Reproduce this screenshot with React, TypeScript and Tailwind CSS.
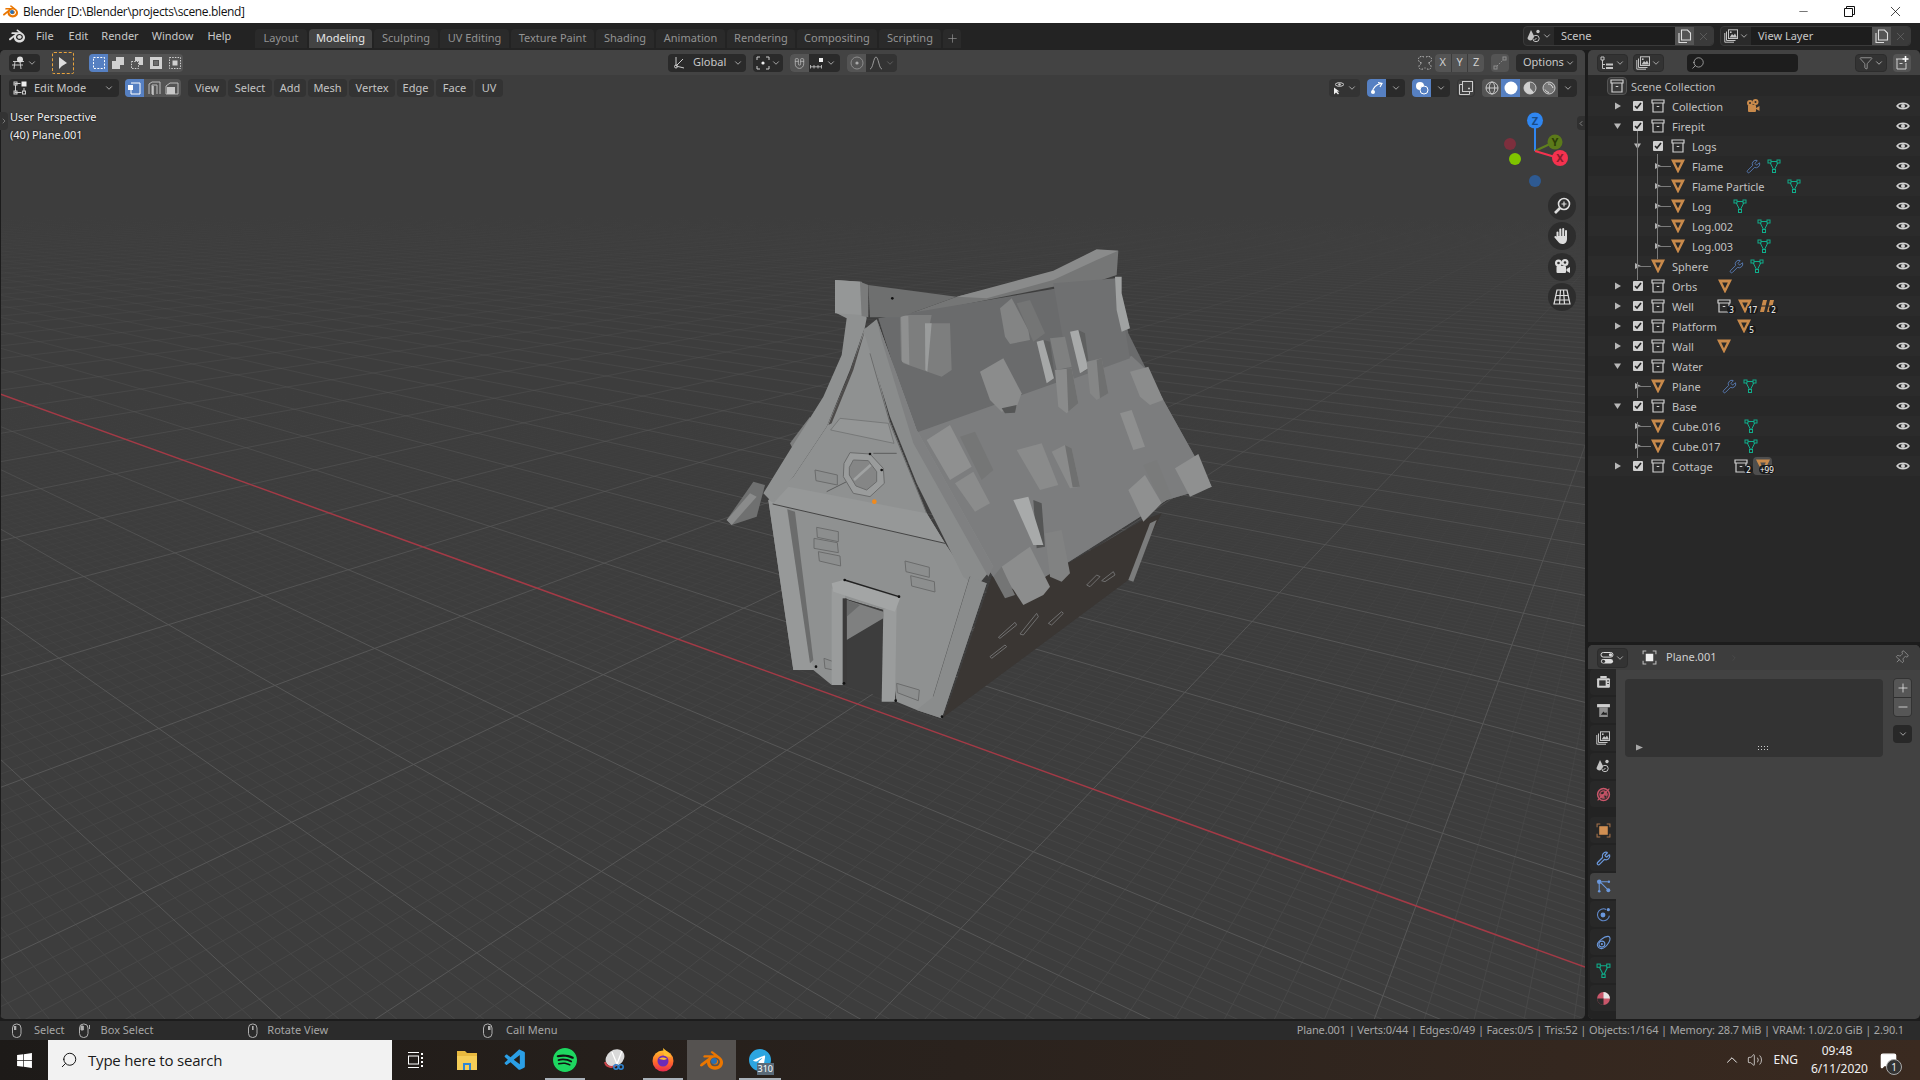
import React from "react";
import { Wrench, Search, Funnel, Pin, Minus, X, Plus, ChevronDown, ChevronUp, ChevronLeft, ChevronRight, Magnet, MessageSquare, Volume2 } from "lucide-react";
import { SiBlender, SiSpotify, SiTelegram } from "react-icons/si";
import { FaWindows } from "react-icons/fa";
import { VscVscode } from "react-icons/vsc";

const G = "#c4c4c4";

const Ic = ({ s = 14, children, className = "" }: { s?: number; children: React.ReactNode; className?: string }) => (
  <svg width={s} height={s} viewBox="0 0 14 14" fill="none" className={className}>
    {children}
  </svg>
);

const Chev = ({ className = "text-[#bdbdbd]" }: { className?: string }) => <ChevronDown size={10} strokeWidth={2} className={className} />;

const CollectionIcon = ({ c = "#cfcfcf" }: { c?: string }) => (
  <Ic>
    <path d="M1 1h12v3H1zM2 4v9h10V4M5.7 7.5h2.6" stroke={c} strokeWidth="1.2" />
  </Ic>
);
const ObjectIcon = () => (
  <Ic>
    <path fillRule="evenodd" fill="#c98a4b" d="M0 .5h14L7 14.5zM4.2 3.4 7 9.2l2.8-5.8z" />
  </Ic>
);
const MeshIcon = ({ s = 14 }: { s?: number }) => (
  <Ic s={s}>
    <path d="M2.5 2.5h9L7 11.5z" stroke="#10ad8b" strokeWidth="1" />
    <rect x="1" y="1" width="3" height="3" fill="#282828" stroke="#10ad8b" />
    <rect x="10" y="1" width="3" height="3" fill="#282828" stroke="#10ad8b" />
    <rect x="5.5" y="10.5" width="3" height="3" fill="#282828" stroke="#10ad8b" />
  </Ic>
);
const WrenchIcon = () => <Wrench size={15} strokeWidth={1.3} color="#5f88c9" />;
const EyeIcon = () => (
  <Ic>
    <path d="M1 7C3.4 3.4 10.6 3.4 13 7 10.6 10.6 3.4 10.6 1 7Z" stroke="#d0d0d0" strokeWidth="1.4" />
    <circle cx="7" cy="7" r="2" fill="#d0d0d0" />
  </Ic>
);
const LayerIcon = () => (
  <Ic>
    <path d="M.8 4v9.2H10M2.5 2.5v9h9" stroke={G} strokeWidth="1" />
    <rect x="4.5" y=".8" width="9" height="8.7" stroke={G} strokeWidth="1" />
    <path d="M5.5 8.5 8 5l1.5 1.5L11 4.5l2 4z" fill={G} />
    <circle cx="6.8" cy="3.2" r=".9" fill={G} />
  </Ic>
);
const SceneIcon = () => (
  <Ic>
    <path d="M4 1 .5 9c0 2 3 3 4.5 2L7 7z" fill={G} />
    <circle cx="9" cy="9.5" r="3.2" stroke={G} />
    <circle cx="11" cy="2.5" r="1.7" fill={G} />
    <path d="M7.5 11 9.5 9" stroke={G} />
  </Ic>
);
const DashSquare = () => (
  <Ic>
    <rect x="1.5" y="1.5" width="11" height="11" stroke="#fff" strokeDasharray="2 1.4" />
  </Ic>
);

const Check = () => (
  <span className="w-[10px] h-[10px] bg-[#cfcfcf] rounded-[1px] flex items-center justify-center shrink-0">
    <svg width="8" height="8" viewBox="0 0 8 8" fill="none">
      <path d="M1 4l2 2 4-5" stroke="#222" strokeWidth="1.6" />
    </svg>
  </span>
);

const Badge = ({ t, className }: { t: string; className: string }) => (
  <span className={`absolute top-[6px] h-[9px] min-w-[9px] px-[1px] rounded-full bg-[#1a1a1a] text-white text-[8px] leading-[9px] text-center ${className}`}>{t}</span>
);

type Item = React.ReactNode;
type RowT = { label: string; lvl: 0 | 1 | 2; kind: "coll" | "obj"; exp: "r" | "d" | "s"; w: string; items?: Item[]; horiz?: boolean };

const M = <MeshIcon key="m" />;
const W = <WrenchIcon key="w" />;
const Sp = (k: string, c: string) => <span key={k} className={c} />;

const rows: RowT[] = [
  { label: "Collection", lvl: 0, kind: "coll", exp: "r", w: "w-[72px]", items: [
    <svg key="c" width="16" height="16" viewBox="0 0 16 16"><circle cx="6" cy="5" r="3" fill="#c98a4b" /><circle cx="11.5" cy="4" r="3" fill="#c98a4b" /><rect x="4" y="7" width="8" height="7" rx="1" fill="#c98a4b" /><path d="M12 10l3.5-2v5L12 11z" fill="#c98a4b" /><circle cx="6" cy="5" r="1" fill="#2b2b2b" /><circle cx="11.5" cy="4" r="1" fill="#2b2b2b" /></svg>,
  ] },
  { label: "Firepit", lvl: 0, kind: "coll", exp: "d", w: "w-[60px]" },
  { label: "Logs", lvl: 1, kind: "coll", exp: "d", w: "w-[40px]" },
  { label: "Flame", lvl: 2, kind: "obj", exp: "s", w: "w-[54px]", items: [W, Sp("a", "w-[4px]"), M], horiz: true },
  { label: "Flame Particle", lvl: 2, kind: "obj", exp: "s", w: "w-[95px]", items: [M], horiz: true },
  { label: "Log", lvl: 2, kind: "obj", exp: "s", w: "w-[41px]", items: [M], horiz: true },
  { label: "Log.002", lvl: 2, kind: "obj", exp: "s", w: "w-[65px]", items: [M], horiz: true },
  { label: "Log.003", lvl: 2, kind: "obj", exp: "s", w: "w-[65px]", items: [M], horiz: true },
  { label: "Sphere", lvl: 1, kind: "obj", exp: "s", w: "w-[57px]", items: [W, Sp("a", "w-[4px]"), M], horiz: true },
  { label: "Orbs", lvl: 0, kind: "coll", exp: "r", w: "w-[46px]", items: [<ObjectIcon key="o" />] },
  { label: "Well", lvl: 0, kind: "coll", exp: "r", w: "w-[45px]", items: [
    <span key="a" className="relative flex w-[20px]"><CollectionIcon /><Badge t="3" className="left-[10px]" /></span>,
    <span key="b" className="relative flex w-[21px]"><ObjectIcon /><Badge t="17" className="left-[9px]" /></span>,
    <span key="c" className="relative flex w-[14px]">
      <svg width="14" height="14" viewBox="0 0 14 14"><path d="M3 1h4L4 13H0zM10 1h4l-3 12H7z" fill="#c98a4b" /><path d="M0 7h14" stroke="#282828" /></svg>
      <Badge t="2" className="left-[9px]" />
    </span>,
  ] },
  { label: "Platform", lvl: 0, kind: "coll", exp: "r", w: "w-[65px]", items: [
    <span key="b" className="relative flex w-[21px]"><ObjectIcon /><Badge t="5" className="left-[10px]" /></span>,
  ] },
  { label: "Wall", lvl: 0, kind: "coll", exp: "r", w: "w-[45px]", items: [<ObjectIcon key="o" />] },
  { label: "Water", lvl: 0, kind: "coll", exp: "d", w: "w-[60px]" },
  { label: "Plane", lvl: 1, kind: "obj", exp: "s", w: "w-[50px]", items: [W, Sp("a", "w-[4px]"), M], horiz: true },
  { label: "Base", lvl: 0, kind: "coll", exp: "d", w: "w-[60px]" },
  { label: "Cube.016", lvl: 1, kind: "obj", exp: "s", w: "w-[72px]", items: [M], horiz: true },
  { label: "Cube.017", lvl: 1, kind: "obj", exp: "s", w: "w-[72px]", items: [M], horiz: true },
  { label: "Cottage", lvl: 0, kind: "coll", exp: "r", w: "w-[62px]", items: [
    <span key="a" className="relative flex w-[18px]"><CollectionIcon /><Badge t="2" className="left-[10px]" /></span>,
    <span key="b" className="relative flex items-center justify-center w-[19px] h-[18px] bg-[#4e4e4e] rounded-[4px]"><ObjectIcon /><Badge t="+99" className="left-[6px] top-[8px]" /></span>,
  ] },
];

const indent = ["pl-[26px]", "pl-[46px]", "pl-[66px]"];

function Expand({ t }: { t: RowT["exp"] }) {
  return (
    <span className="w-[8px] h-[8px] flex items-center justify-center shrink-0">
      <svg width="8" height="8" viewBox="0 0 8 8">
        {t === "d" ? <path d="M0 1.5h7L3.5 7z" fill="#b8b8b8" /> : t === "r" ? <path d="M1 .5 7 4 1 7.5z" fill="#b8b8b8" /> : <path d="M1 1 7 4 1 7z" fill="#b0b0b0" />}
      </svg>
    </span>
  );
}

function Row({ r, i }: { r: RowT; i: number }) {
  return (
    <div className={`relative h-[20px] flex items-center pr-[10px] ${indent[r.lvl]} ${i % 2 === 0 ? "bg-[#2b2b2b]" : "bg-[#282828]"}`}>
      {r.horiz && <span className="absolute h-px w-[13px] bg-[#7a7a7a] top-[10px] ml-[4px]" />}
      <Expand t={r.exp} />
      {r.kind === "coll" ? (
        <>
          <span className="ml-[11px]"><Check /></span>
          <span className="ml-[8px] flex"><CollectionIcon /></span>
          <span className="ml-[7px]" />
        </>
      ) : (
        <>
          <span className="ml-[9px] flex"><ObjectIcon /></span>
          <span className="ml-[7px]" />
        </>
      )}
      <span className={`${r.w} shrink-0 text-[#c2c2c2] whitespace-nowrap pt-[2px]`}>{r.label}</span>
      <span className="flex items-center gap-[1px]">{r.items}</span>
      <span className="ml-auto flex"><EyeIcon /></span>
    </div>
  );
}

function TreeLine({ c }: { c: string }) {
  return <span className={`absolute w-px bg-[#7a7a7a] ${c}`} />;
}

function Outliner() {
  return (
    <div className="h-[592px] bg-[#282828] rounded-t-[5px] flex flex-col overflow-hidden text-[11px]">
      <div className="h-[25px] bg-[#424242] flex items-center shrink-0 pl-[9px]">
        <span className="w-[31px] h-[18px] rounded-[4px] bg-[#333] border border-[#2c2c2c] flex items-center justify-center gap-[1px]">
          <Ic><path d="M1 1h3v3H1zM2.500 4v8.500H5M2.500 8.500H5" stroke={G} /><path d="M6 7.500h7v2H6zM6 11h7v2H6z" fill={G} /></Ic>
          <Chev />
        </span>
        <span className="ml-[5px] w-[31px] h-[18px] rounded-[4px] bg-[#333] border border-[#2c2c2c] flex items-center justify-center gap-[1px]"><LayerIcon /><Chev /></span>
        <span className="ml-[23px] w-[111px] h-[18px] rounded-[4px] bg-[#1d1d1d] flex items-center pl-[4px]">
          <Search size={14} strokeWidth={1.2} color={G} className="-scale-x-100" />
        </span>
        <span className="ml-[57px] w-[32px] h-[18px] rounded-[4px] bg-[#333] border border-[#2c2c2c] flex items-center justify-center gap-[1px]">
          <Funnel size={14} strokeWidth={1.1} color={G} />
          <Chev />
        </span>
        <span className="ml-[6px] w-[18px] h-[18px] rounded-[4px] bg-[#545454] flex items-center justify-center">
          <Ic><path d="M1 3h8M2 3v10h9V7M4.5 7.5h3" stroke="#d0d0d0" /><path d="M10.5 0v6M7.5 3h6" stroke="#fff" strokeWidth="1.6" /></Ic>
        </span>
      </div>
      <div className="relative">
        <div className="h-[21px] flex items-center pl-[19px] bg-[#282828]">
          <span className="w-[20px] h-[18px] rounded-[4px] bg-[#383838] border border-[#555] flex items-center justify-center"><CollectionIcon /></span>
          <span className="ml-[4px] pt-[4px] text-[#bcbcbc]">Scene Collection</span>
        </div>
        {rows.map((r, i) => (
          <Row key={r.label} r={r} i={i} />
        ))}
        <TreeLine c="left-[49px] top-[56px] h-[149px]" />
        <TreeLine c="left-[69px] top-[79px] h-[105px]" />
        <TreeLine c="left-[49px] top-[307px] h-[16px]" />
        <TreeLine c="left-[49px] top-[347px] h-[36px]" />
      </div>
    </div>
  );
}

const TabI = ({ active, children, mt = "" }: { active?: boolean; children: React.ReactNode; mt?: string }) => (
  <div className={`h-[26px] w-[26px] flex items-center justify-center rounded-l-[4px] ${active ? "bg-[#424242]" : "bg-[#282828]"} ${mt}`}>{children}</div>
);

function Properties() {
  return (
    <div className="h-[374px] rounded-[5px] overflow-hidden flex flex-col text-[11px] bg-[#424242]">
      <div className="h-[25px] bg-[#3d3d3d] flex items-center pl-[9px] shrink-0">
        <span className="w-[31px] h-[20px] rounded-[4px] bg-[#333] border border-[#2c2c2c] flex items-center justify-center gap-[1px]">
          <Ic><rect x="1" y="1.5" width="12" height="4.6" rx="2.3" stroke="#ddd" /><rect x="1" y="8" width="12" height="4.6" rx="2.3" fill="#ddd" /><circle cx="10.5" cy="3.8" r="1.6" fill="#ddd" /><circle cx="3.5" cy="10.3" r="1.6" fill="#333" /></Ic>
          <Chev />
        </span>
        <span className="ml-[14px] flex">
          <Ic s={15}><path d="M1 4V1h3M10 1h3v3M13 10v3h-3M4 13H1v-3" stroke="#bbb" /><rect x="3.5" y="3.5" width="7" height="7" fill="#eee" /></Ic>
        </span>
        <span className="ml-[9px] text-[#d0d0d0]">Plane.001</span>
        <ChevronRight size={10} className="ml-[12px] text-[#4c4c4c]" />
        <Pin size={15} strokeWidth={1.2} color="#9a9a9a" className="ml-auto mr-[11px] rotate-45" />
      </div>
      <div className="flex flex-1 min-h-0">
        <div className="w-[28px] bg-[#232323] pl-[2px] -mt-[1px] flex flex-col gap-[2px] shrink-0">
          <TabI><Ic s={15}><rect x="1" y="3" width="12" height="9" rx="1" fill="#cfcfcf" /><rect x="3" y="5" width="6" height="5" fill="#333" /><path d="M4 1h6v2H4z" fill="#cfcfcf" /><path d="M10.5 5.5h1.5M10.5 8h1.5" stroke="#333" /></Ic></TabI>
          <TabI><Ic s={15}><rect x="1" y="1" width="12" height="3" fill="#cfcfcf" /><path d="M3 4h8v9H3z" fill="#8f8f8f" /><path d="M4.5 11 7 8l1.5 1.5 1-1 1 2.5z" fill="#222" /></Ic></TabI>
          <TabI><LayerIcon /></TabI>
          <TabI><SceneIcon /></TabI>
          <TabI><Ic s={15}><circle cx="7" cy="7" r="5.5" stroke="#c9566a" strokeWidth="1.4" /><circle cx="7" cy="7" r="4" fill="#b94f60" /><path d="M4 5.5l3-1.5.5 2-2 .8zM7.5 8l2.5.5-1.5 2.5z" fill="#2a2a2a" /><path d="M1.5 12.5 12.5 1.5" stroke="#c9566a" /></Ic></TabI>
          <TabI mt="mt-[8px]"><Ic s={15}><path d="M1 4V1h3M10 1h3v3M13 10v3h-3M4 13H1v-3" stroke="#a5724a" /><rect x="3" y="3" width="8" height="8" fill="#d18f52" /></Ic></TabI>
          <TabI><Wrench size={15} strokeWidth={2} color="#6b98dc" /></TabI>
          <TabI active><Ic s={15}><circle cx="3" cy="2.6" r="2.1" fill="#6b98dc" /><path d="M3 3v8M4 3l7 7M5 2.5h6" stroke="#6b98dc" /><circle cx="3" cy="11.5" r="1.2" fill="#6b98dc" /><circle cx="11.5" cy="10.5" r="1.8" fill="#6b98dc" /><circle cx="12" cy="2.5" r="1.2" fill="#6b98dc" /></Ic></TabI>
          <TabI><Ic s={15}><path d="M9.5 2.3A5.6 5.6 0 1 0 12.5 8" stroke="#5f88c9" strokeWidth="1" /><circle cx="6.5" cy="7.5" r="2.3" fill="#6b98dc" /><circle cx="11.5" cy="2.5" r="1.5" fill="#6b98dc" /></Ic></TabI>
          <TabI><Ic s={15}><path d="M1.3 9.5C.6 7 7.5 1 11.5 1.3c2 .2 2 3 .7 5.2-2 3.500-4 6-7 6.200-2 .1-3.300-1-3.900-3.200z" stroke="#6b98dc" /><circle cx="5.500" cy="8.500" r="2.800" stroke="#6b98dc" /><circle cx="5.500" cy="8.500" r="1" fill="#6b98dc" /></Ic></TabI>
          <TabI><MeshIcon s={15} /></TabI>
          <TabI><Ic s={15}><circle cx="7" cy="7" r="6" fill="#c9566a" /><path d="M7 7V1a6 6 0 0 1 6 6z" fill="#e6e6e6" /><path d="M7 7H1a6 6 0 0 0 6 6z" fill="#2b2b2b" /></Ic></TabI>
        </div>
        <div className="flex-1 pt-[9px] pl-[9px] flex items-start">
          <div className="relative w-[258px] h-[78px] bg-[#333333] rounded-[4px]">
            <span className="absolute left-[11px] bottom-[6px] text-[0px]"><svg width="7" height="7" viewBox="0 0 7 7"><path d="M0 .5 7 3.500 0 6.500z" fill="#a8a8a8" /></svg></span>
            <span className="absolute left-[133px] bottom-[6px] text-[0px]"><svg width="11" height="5" viewBox="0 0 11 5"><path d="M0 .5h1M3 .5h1M6 .5h1M9 .5h1M0 3.500h1M3 3.500h1M6 3.500h1M9 3.500h1" stroke="#cfcfcf" /></svg></span>
          </div>
          <div className="ml-[10px] -mt-[1px] w-[19px] flex flex-col">
            <div className="rounded-[4px] overflow-hidden flex flex-col gap-px bg-[#2f2f2f] border border-[#333] w-[19px]">
              <span className="h-[18px] bg-[#565656] flex items-center justify-center"><Plus size={14} strokeWidth={1.3} color="#eee" /></span>
              <span className="h-[18px] bg-[#565656] flex items-center justify-center"><Minus size={14} strokeWidth={1.3} color="#eee" /></span>
            </div>
            <span className="mt-[8px] h-[18px] rounded-[4px] bg-[#282828] flex items-center justify-center"><Chev /></span>
          </div>
        </div>
      </div>
    </div>
  );
}

// ---------- viewport drawing ----------
const R = 1020;
function gridPaths() {
  const VA = [-647, 160];
  const VB = [1690, 160];
  let major = "";
  let minor = "";
  for (let n = -60; n <= 1000; n++) {
    const x = 1732 + (n * 290) / 10;
    const d = `M${VA[0]} ${VA[1]}L${x.toFixed(1)} ${R}`;
    if (n === 0) continue;
    if (n % 10 === 0) major += d;
    else minor += d;
  }
  for (let n = -600; n <= 60; n++) {
    const x = -1126 + (n * 500) / 10;
    const d = `M${VB[0]} ${VB[1]}L${x.toFixed(1)} ${R}`;
    if (n % 10 === 0) major += d;
    else minor += d;
  }
  return { major, minor };
}
const grid = gridPaths();

const L1 = "#8f9191";
const shingles: [string, string][] = [
  ["600,255 695,255 690,280 750,280 755,420 725,440 610,400 603,390", "#7d7e7e"],
  ["603,258 625,258 628,405 606,395", "#8f9090"],
  ["675,280 695,280 682,425 676,420", "#9a9c9c"],
  ["900,235 935,205 985,300 990,330 930,342 915,320", "#838484"],
  ["950,220 990,210 1035,310 1000,335", "#747575"],
  ["840,425 910,385 965,490 950,530 905,545 870,510", "#8b8c8c"],
  ["905,535 950,525 945,548 915,550", "#555656"],
  ["1030,330 1050,335 1065,445 1042,455", "#5f6060"],
  ["1050,325 1095,320 1115,410 1070,420", "#7f8080"],
  ["1065,420 1115,415 1135,520 1100,550 1075,530", "#8a8b8b"],
  ["1100,415 1115,415 1135,520 1105,545", "#6f7070"],
  ["1010,335 1030,330 1062,445 1040,460", "#a6a8a8"],
  ["1135,300 1155,310 1168,415 1150,425", "#5f6060"],
  ["1110,305 1135,300 1165,415 1140,430", "#a8aaaa"],
  ["1160,395 1205,385 1225,490 1190,510 1170,490", "#858686"],
  ["1190,390 1205,385 1225,490 1200,505", "#6f7070"],
  ["1290,425 1345,410 1390,510 1350,525 1320,500", "#8b8c8c"],
  ["1245,140 1265,140 1265,190 1290,295 1265,305 1250,240", "#a0a2a2"],
  ["1260,550 1295,540 1335,650 1300,660", "#8e8f8f"],
  ["780,620 825,605 880,720 845,750", "#757676"],
  ["680,630 750,585 815,710 750,750", "#8f9090"],
  ["765,760 820,725 870,820 825,845", "#8b8c8c"],
  ["950,660 1025,640 1075,765 1020,780", "#8a8b8b"],
  ["1055,665 1095,645 1115,655 1140,770 1110,775", "#8a8b8b"],
  ["1095,645 1115,655 1140,770 1118,772", "#6f7070"],
  ["1000,810 1025,820 1035,950 1010,955", "#555656"],
  ["940,810 985,800 1030,945 1000,945", "#a8aaaa"],
  ["1035,910 1085,900 1110,1030 1085,1055 1050,1040", "#818282"],
  ["905,1010 990,950 1050,1070 1030,1095 970,1125 915,1040", "#8c8d8d"],
  ["880,1040 905,1010 945,1095 915,1105", "#747575"],
  ["1330,705 1370,690 1415,800 1385,820", "#7a7b7b"],
  ["1285,780 1335,735 1385,820 1330,875", "#8f9090"],
  ["1425,715 1495,672 1535,770 1470,800", "#8f9090"],
];

function House() {
  return (
    <g transform="translate(700,230) scale(0.33333)">
      {/* back pieces */}
      <polygon points="270,640 330,560 340,585 280,660" fill="#7d7e7e" />
      <polygon points="80,870 160,755 195,765 170,860 95,885" fill="#6f7070" />
      <polygon points="80,870 150,790 170,800 95,885" fill="#8a8b8b" />
      {/* dark side wall */}
      <polygon points="875,1040 1000,1060 1330,870 1385,850 1285,1050 730,1462 760,1380" fill="#3a3633" />
      <polygon points="1285,1050 1350,880 1370,870 1300,1055" fill="#7b7c7c" />
      {[
        "1160,1065 1190,1035 1200,1040 1170,1070",
        "1205,1052 1240,1025 1245,1035 1215,1055",
        "1045,1180 1085,1145 1090,1150 1055,1185",
        "960,1212 1010,1150 1015,1160 970,1215",
        "895,1222 945,1177 950,1185 900,1225",
        "870,1280 915,1245 920,1250 875,1285",
      ].map((p) => (
        <polygon key={p} points={p} fill="none" stroke="#6f6f6f" strokeWidth="3" />
      ))}
      {/* ridge */}
      <polygon points="770,200 1060,130 1190,60 1255,62 1250,135 1190,155 1060,170 600,262" fill="#757676" />
      <polygon points="770,200 1060,122 1190,58 1255,62 1190,90 1060,150 860,205" fill="#8a8b8b" />
      {/* roof */}
      <polygon points="535,265 1250,145 1285,310 1340,420 1535,770 1400,810 1000,1063 960,1090 880,1040 860,1010 640,600" fill="#6a6b6c" />
      <polygon points="648,608 1295,378 1340,420 1535,770 1400,810 1000,1063 960,1090 880,1040 860,1010" fill="#7c7d7e" />
      <polygon points="1060,160 1250,145 1290,385 1110,450" fill="#6f7071" />
      {shingles.map(([p, f]) => (
        <polygon key={p} points={p} fill={f} />
      ))}
      {/* gable + wall */}
      <polygon points="495,290 570,575 680,850 735,940 810,1050 860,1060 725,1465 650,1440 590,1415 550,1140 430,1105 395,1365 340,1320 280,1320 205,810 280,740 380,590 450,430" fill={L1} />
      <polygon points="205,810 260,835 335,1300 345,1320 280,1320" fill="#979999" />
      <polygon points="262,838 285,845 340,1290 330,1300" fill="#6b6c6c" />
      {/* left beam */}
      <polygon points="405,150 485,155 500,265 495,290 450,420 380,590 280,740 215,815 190,790 270,660 370,500 425,375 440,265 410,250" fill={L1} />
      <polygon points="497,295 460,420 395,580 385,585 450,425" fill="#4d4b4a" />
      <polygon points="405,150 480,155 485,255 405,250" fill="#959797" />
      <polygon points="480,155 505,165 505,262 485,258" fill="#7a7b7b" />
      <polygon points="505,165 770,200 600,262 510,262" fill="#6e6f6f" />
      {/* right beam */}
      <polygon points="490,300 530,268 650,600 880,1010 830,1070 790,1040 650,760 570,560" fill="#8a8c8c" />
      <polygon points="530,268 650,600 880,1010 865,1040 640,640 545,330" fill="#7f8081" />
      <path d="M510 370 570 580 680 850" stroke="#6a6b6b" strokeWidth="3" fill="none" />
      {/* cross beams */}
      <polygon points="392,600 420,565 565,580 582,640" fill="#949696" stroke="#6a6b6b" strokeWidth="2" />
      <polygon points="218,822 265,770 680,850 735,940" fill="#969898" />
      <path d="M218 822 735 940" stroke="#444" strokeWidth="3" fill="none" />
      <path d="M810 1040 700 1400M380 785 440 755M520 670 590 670" stroke="#5c5d5d" strokeWidth="3" fill="none" />
      {/* bricks */}
      {[
        "350,892 415,905 415,935 352,922",
        "342,925 412,938 415,968 342,955",
        "355,965 420,978 422,1008 358,993",
        "345,720 412,735 412,765 348,752",
        "615,993 688,1012 688,1042 618,1025",
        "632,1037 703,1055 705,1086 635,1068",
        "590,1360 658,1380 655,1412 592,1388",
        "372,1285 400,1295 400,1320 375,1315",
      ].map((p) => (
        <polygon key={p} points={p} fill="#8c8e8e" stroke="#6a6b6b" strokeWidth="3" />
      ))}
      {/* round window */}
      <polygon points="450,668 510,672 550,715 553,760 510,800 460,790 430,740 432,700" fill="#9a9c9c" stroke="#6a6b6b" strokeWidth="3" />
      <polygon points="460,690 505,692 530,725 530,755 500,780 468,768 448,735 448,712" fill="#858686" stroke="#6a6b6b" strokeWidth="3" />
      <path d="M462 750 512 705" stroke="#a0a2a2" strokeWidth="8" />
      {/* door */}
      <polygon points="430,1105 550,1140 550,1415 590,1415 430,1365" fill="#3d3d3d" />
      <polygon points="440,1110 550,1145 550,1165 440,1230" fill="#7f8080" />
      <polygon points="440,1110 480,1125 440,1160" fill="#6a6b6b" />
      <polygon points="395,1075 435,1095 435,1365 395,1365" fill="#9a9c9c" />
      <polygon points="428,1105 440,1105 440,1365 428,1365" fill="#3b3a3a" />
      <polygon points="550,1140 590,1120 585,1415 545,1415" fill="#9a9c9c" />
      <polygon points="395,1060 430,1050 600,1105 585,1145 400,1085" fill="#a3a5a5" />
      <path d="M434 1050 597 1100" stroke="#222" strokeWidth="4" />
      {/* lower wall corner */}
      <polygon points="700,1400 810,1040 860,1060 725,1465 650,1440" fill="#8a8c8c" />
      {/* verts */}
      {[[434, 1050], [597, 1100], [348, 1310], [432, 1360], [587, 1412], [726, 1460], [545, 720], [510, 672], [577, 205]].map(([x, y]) => (
        <circle key={`${x}${y}`} cx={x} cy={y} r="4" fill="#111" />
      ))}
      <circle cx="523" cy="815" r="7" fill="#f08a1d" />
    </g>
  );
}

function Gizmo() {
  return (
    <g fontFamily="Noto Sans, sans-serif" fontSize="11" fontWeight="700" textAnchor="middle">
      <circle cx="1510" cy="144" r="6" fill="#7d2f3d" />
      <circle cx="1535" cy="181" r="6" fill="#2e5a92" />
      <circle cx="1515" cy="159" r="6" fill="#7fc400" />
      <path d="M1535 151V124" stroke="#2f86f0" strokeWidth="2" />
      <path d="M1535 151 1552 143" stroke="#5f7f1f" strokeWidth="2" />
      <path d="M1535 151 1555 157" stroke="#f5324f" strokeWidth="2" />
      <circle cx="1535" cy="120.500" r="8" fill="#2f86f0" />
      <text x="1535" y="124.500" fill="#184a85">Z</text>
      <circle cx="1555" cy="142" r="7.500" fill="#5b7a1a" />
      <text x="1555" y="146" fill="#2c3d08">Y</text>
      <circle cx="1560" cy="158" r="8" fill="#f5324f" />
      <text x="1560" y="162" fill="#8a1c2c">X</text>
    </g>
  );
}

const NavBtn = ({ c, children }: { c: string; children: React.ReactNode }) => (
  <div className={`absolute left-[1548px] w-[28px] h-[28px] rounded-full bg-[#2d2d2d] flex items-center justify-center ${c}`}>{children}</div>
);

const Grp = ({ w, children, className = "" }: { w: string; children: React.ReactNode; className?: string }) => (
  <div className={`${w} h-[18px] rounded-[4px] bg-[#2a2a2a] flex items-center overflow-hidden shrink-0 ${className}`}>{children}</div>
);

const Seg = ({ blue, grey, w = "w-[19px]", children }: { blue?: boolean; grey?: boolean; w?: string; children: React.ReactNode }) => (
  <span className={`${w} h-full flex items-center justify-center shrink-0 ${blue ? "bg-[#5680c2]" : grey ? "bg-[#545454]" : ""}`}>{children}</span>
);

const menus: [string, string][] = [
  ["View", "w-[38px]"],
  ["Select", "w-[44px]"],
  ["Add", "w-[32px]"],
  ["Mesh", "w-[39px]"],
  ["Vertex", "w-[46px]"],
  ["Edge", "w-[37px]"],
  ["Face", "w-[37px]"],
  ["UV", "w-[28px]"],
];

function Viewport() {
  return (
    <div className="relative w-[1585px] h-[969px] bg-[#3d3d3d] rounded-[5px] overflow-hidden text-[11px] text-[#c4c4c4]">
      <svg className="absolute inset-0" width="1585" height="969" viewBox="0 50 1585 969">
        <defs>
          <linearGradient id="gMaj" gradientUnits="userSpaceOnUse" x1="0" y1="215" x2="0" y2="640">
            <stop offset="0" stopColor="#565656" stopOpacity="0" />
            <stop offset="1" stopColor="#565656" stopOpacity="1" />
          </linearGradient>
          <linearGradient id="gMin" gradientUnits="userSpaceOnUse" x1="0" y1="380" x2="0" y2="1000">
            <stop offset="0" stopColor="#474747" stopOpacity="0" />
            <stop offset="1" stopColor="#474747" stopOpacity="1" />
          </linearGradient>
        </defs>
        <path d={grid.minor} stroke="url(#gMin)" strokeWidth="1" fill="none" />
        <path d={grid.major} stroke="url(#gMaj)" strokeWidth="1" fill="none" />
        <path d="M0 394 1585 967" stroke="#a33a46" strokeWidth="1.500" />
        <House />
        <Gizmo />
      </svg>
      <span className="absolute left-0 top-0 w-px h-full bg-[#1c1c1c]" />

      {/* tool settings */}
      <div className="relative h-[25px] bg-[#434343] flex items-center pl-[9px] pr-[8px]">
        <Grp w="w-[31px]" className="justify-center gap-[1px]">
          <Ic><path d="M0 9h11M3 5.500 2 13M8 5.500 9 13M1 5.500h11" stroke={G} /><circle cx="8" cy="3.500" r="3" fill="#ddd" /></Ic>
          <Chev />
        </Grp>
        <span className="ml-[12px] w-[22px] h-[22px] border border-dashed border-[#e8a33c] rounded-[2px] flex items-center justify-center">
          <svg width="10" height="12" viewBox="0 0 10 12"><path d="M1 0v12l3-3 5-3z" fill="#ddd" /></svg>
        </span>
        <Grp w="w-[94px]" className="ml-[15px] bg-[#545454]">
          <Seg blue><DashSquare /></Seg>
          <Seg><Ic><path d="M5 1h8v8H9v4H1V5h4z" fill="#d0d0d0" /></Ic></Seg>
          <Seg><Ic><path d="M5 1h8v8H9V5H5z" fill="#d0d0d0" /><rect x="1.500" y="5.500" width="7" height="7" stroke="#d0d0d0" strokeDasharray="1.500 1.200" /></Ic></Seg>
          <Seg><Ic><path fillRule="evenodd" d="M1 1h12v12H1zM4 4v6h6V4z" fill="#d0d0d0" /><rect x="5" y="5" width="4" height="4" fill="#d0d0d0" opacity=".2" /></Ic></Seg>
          <Seg><Ic><rect x="1.500" y="1.500" width="11" height="11" stroke="#d0d0d0" strokeDasharray="1.500 1.200" /><rect x="4.500" y="4.500" width="5" height="5" fill="#d0d0d0" /></Ic></Seg>
        </Grp>
        <Grp w="w-[78px]" className="ml-[485px] pl-[5px]">
          <Ic><path d="M3 1v9l8 2M3 10l7-7" stroke="#ccc" /><circle cx="3" cy="10.500" r="1.500" stroke="#ccc" /></Ic>
          <span className="ml-[6px] w-[40px] text-[#c8c8c8]">Global</span>
          <Chev />
        </Grp>
        <Grp w="w-[30px]" className="ml-[7px] justify-center gap-[1px]">
          <Ic><path d="M1 4V1h3M10 1h3v3M13 10v3h-3M4 13H1v-3" stroke="#ccc" /><circle cx="7" cy="7" r="1.600" fill="#eee" /></Ic>
          <Chev />
        </Grp>
        <Grp w="w-[50px]" className="ml-[7px]">
          <Seg grey><Magnet size={13} strokeWidth={1.300} color="#bdbdbd" className="rotate-[135deg]" /></Seg>
          <span className="ml-[1px] flex"><Ic><path d="M.5 9v3.500M4 9v3.500M8 9v3.500M11.500 9v3.500M.5 10.800h11" stroke="#ccc" strokeWidth=".8" /><rect x="9" y="2" width="4" height="4" fill="#eee" /></Ic></span>
          <span className="ml-[2px] flex"><Chev /></span>
        </Grp>
        <Grp w="w-[50px]" className="ml-[7px] bg-[#333]">
          <Seg grey><Ic><circle cx="7" cy="7" r="6" stroke="#8d8d8d" /><circle cx="7" cy="7" r="1.600" fill="#aaa" /></Ic></Seg>
          <span className="ml-[3px] flex"><Ic><path d="M1 13C4 13 4.500 1 7 1s3 12 6 12" stroke="#999" /></Ic></span>
          <span className="ml-[2px] flex"><Chev className="text-[#666]" /></span>
        </Grp>
        <div className="ml-auto flex items-center">
          <svg width="16" height="16" viewBox="0 0 16 16" fill="none"><path d="M7 2C4 .5 1 2 1.500 5 2 7 3 7.500 5 8c-2 1-3.500 2.500-3 4.500.5 2 3.500 2.500 5.500.5M9 2c3-1.500 6 0 5.500 3-.5 2-1.500 2.500-3.500 3 2 1 3.500 2.500 3 4.500-.5 2-3.500 2.500-5.500.5" stroke="#b5b5b5" strokeDasharray="1.600 1.100" /></svg>
          <Grp w="w-[49px]" className="ml-[2px] bg-[#3c3c3c] gap-px">
            {["X", "Y", "Z"].map((a) => (
              <span key={a} className="flex-1 h-full bg-[#545454] flex items-center justify-center text-[#cfcfcf]">{a}</span>
            ))}
          </Grp>
          <Grp w="w-[18px]" className="ml-[7px] bg-[#545454] justify-center">
            <Ic><rect x="1" y="10" width="3" height="3" stroke="#8d8d8d" /><rect x="10" y="1" width="3" height="3" stroke="#8d8d8d" /><path d="M4 10 10 4" stroke="#8d8d8d" strokeDasharray="1.500 1.200" /></Ic>
          </Grp>
          <Grp w="w-[61px]" className="ml-[7px] pl-[7px]">
            <span className="w-[42px] text-[#c8c8c8]">Options</span>
            <Chev />
          </Grp>
        </div>
      </div>

      {/* header */}
      <div className="relative h-[18px] mt-[4px] flex items-center pl-[9px] pr-[8px]">
        <Grp w="w-[110px]" className="pl-[4px]">
          <Ic><path d="M1.500 2.500h6M2.500 3.500v7M1.500 11.500h7M11 7v3.500" stroke="#ccc" /><rect x="1" y="1" width="3" height="3" stroke="#ccc" /><rect x="1" y="10" width="3" height="3" stroke="#ccc" /><rect x="9.500" y="10" width="3" height="3" stroke="#ccc" /><rect x="8.500" y=".5" width="5" height="5" fill="#eee" /></Ic>
          <span className="ml-[7px] w-[70px] text-[#c8c8c8]">Edit Mode</span>
          <Chev />
        </Grp>
        <Grp w="w-[56px]" className="ml-[6px] bg-[#545454]">
          <Seg blue><Ic><path d="M3 2h9v11H3V8" stroke="#fff" /><rect x="0" y="4" width="5" height="5" fill="#fff" /></Ic></Seg>
          <Seg><Ic><path d="M2 13V3l3-2h8v12M5 13V4h5v9" stroke="#bbb" /><path d="M6 14V5" stroke="#fff" /></Ic></Seg>
          <Seg w="flex-1"><Ic><path d="M1 5l4-3h8v11H1z" stroke="#bbb" /><path d="M2 6h8v7H2z" fill="#c8c8c8" /></Ic></Seg>
        </Grp>
        <div className="ml-[7px] flex gap-[2px]">
          {menus.map(([m, w]) => (
            <span key={m} className={`${w} h-[18px] rounded-[4px] bg-[#333333] flex items-center justify-center text-[#c4c4c4]`}>{m}</span>
          ))}
        </div>
        <div className="ml-auto flex items-center">
          <Grp w="w-[31px]" className="justify-center gap-[1px] bg-[#333]">
            <Ic><path d="M3 3.500c2-2.500 7-2.500 9 0-2 2.500-7 2.500-9 0z" stroke="#ccc" /><circle cx="7.500" cy="3.500" r="1.300" fill="#ccc" /><path d="M2 6.500v7l2-2 2 2 1-1-2-2h2.500z" fill="#eee" /></Ic>
            <Chev />
          </Grp>
          <Grp w="w-[38px]" className="ml-[7px]">
            <Seg blue><Ic><path d="M2 12C2.500 7 6.500 3 11 2.500M8 1.500l4 1-2 3.500" stroke="#fff" strokeWidth="1.200" /><circle cx="3" cy="11" r="2" fill="#fff" /></Ic></Seg>
            <span className="flex-1 flex justify-center"><Chev /></span>
          </Grp>
          <Grp w="w-[38px]" className="ml-[7px]">
            <Seg blue><Ic><circle cx="5" cy="5" r="4" fill="#fff" /><circle cx="9" cy="9" r="4" stroke="#fff" fill="#5680c2" /></Ic></Seg>
            <span className="flex-1 flex justify-center"><Chev /></span>
          </Grp>
          <Grp w="w-[18px]" className="ml-[7px] bg-[#424242] justify-center border border-[#333]">
            <Ic><rect x="3.500" y=".5" width="10" height="10" stroke="#ccc" /><path d="M3 3.500H.5v10h10V11" stroke="#ccc" /><path d="M6 7h.01M9 7.500h2" stroke="#ccc" strokeWidth="1.500" /></Ic>
          </Grp>
          <Grp w="w-[95px]" className="ml-[7px] bg-[#545454]">
            <Seg><Ic><circle cx="7" cy="7" r="6" stroke="#ccc" /><ellipse cx="7" cy="7" rx="2.700" ry="6" stroke="#ccc" /><path d="M1 7h12" stroke="#ccc" /></Ic></Seg>
            <Seg blue><Ic><circle cx="7" cy="7" r="6.500" fill="#fff" /></Ic></Seg>
            <Seg><Ic><circle cx="7" cy="7" r="6" stroke="#ccc" fill="#6f6f6f" /><path d="M7 1a6 6 0 0 0 0 12 6 6 0 0 0 4-1.500L7 7z" fill="#d0d0d0" /></Ic></Seg>
            <Seg><Ic><circle cx="7" cy="7" r="6" stroke="#ccc" fill="#777" /><path d="M3 8.500a5 5 0 0 0 4 3M6 3c2 0 4 1 5 4" stroke="#ddd" /></Ic></Seg>
            <span className="flex-1 h-full bg-[#2a2a2a] flex items-center justify-center"><Chev /></span>
          </Grp>
        </div>
      </div>

      <div className="relative pl-[10px] mt-[11px] leading-[18px] text-[#f0f0f0] [text-shadow:0_0_2px_#000]">
        <div>User Perspective</div>
        <div>(40) Plane.001</div>
      </div>

      <span className="absolute left-0 top-[62px] w-[8px] h-[18px] bg-[#333] rounded-r-[4px] flex items-center justify-center">
        <ChevronRight size={8} color="#999" />
      </span>
      <span className="absolute left-[1577px] top-[66px] w-[8px] h-[14px] bg-[#303030] rounded-l-[4px] flex items-center justify-center">
        <ChevronLeft size={9} color="#aaa" />
      </span>

      <NavBtn c="top-[142px]">
        <svg width="18" height="18" viewBox="0 0 18 18" fill="none"><circle cx="11" cy="7" r="5.500" stroke="#ddd" strokeWidth="1.600" /><path d="M7 11 2 16" stroke="#ddd" strokeWidth="2.600" /><path d="M11 4.500v5M8.500 7h5" stroke="#ddd" strokeWidth="1.200" /></svg>
      </NavBtn>
      <NavBtn c="top-[172px]">
        <svg width="18" height="18" viewBox="0 0 18 18" fill="#ddd"><rect x="3.500" y="4.500" width="2" height="8" rx="1" /><rect x="6.300" y="1.500" width="2" height="9" rx="1" /><rect x="9.200" y="1" width="2" height="9" rx="1" /><rect x="12" y="3" width="2" height="8" rx="1" /><path d="M3.500 9h10.500v3c0 3-2 5-4.500 5-2.500 0-3.500-1-5-3L1.500 10.500c-.6-1 .6-2 1.500-1.300L5 11z" /></svg>
      </NavBtn>
      <NavBtn c="top-[203px]">
        <svg width="18" height="18" viewBox="0 0 18 18" fill="#ddd"><circle cx="5.500" cy="5" r="3.500" /><circle cx="12" cy="4.500" r="3.500" /><rect x="3.500" y="8" width="9.500" height="7" rx="1" /><path d="M13.500 11 17 9v6l-3.500-2z" /><circle cx="5.500" cy="5" r="1.300" fill="#2d2d2d" /><circle cx="12" cy="4.500" r="1.300" fill="#2d2d2d" /></svg>
      </NavBtn>
      <NavBtn c="top-[233px]">
        <svg width="18" height="18" viewBox="0 0 18 18" fill="none"><path d="M4 2h10l3 14H1zM7.500 2 6.500 16M10.500 2l1 14M3 7.500h12M2 12h14" stroke="#ddd" strokeWidth="1.200" /></svg>
      </NavBtn>
    </div>
  );
}

function TopBar() {
  return (
    <div className="h-[27px] bg-[#232323] flex text-[11px] shrink-0 relative">
      <div className="flex items-center pl-[9px] w-[255px] text-[#c8c8c8] pb-[1px]">
        <SiBlender size={16} color="#ddd" />
        <span className="ml-[11px]">File</span>
        <span className="ml-[15px]">Edit</span>
        <span className="ml-[13px]">Render</span>
        <span className="ml-[13px]">Window</span>
        <span className="ml-[14px]">Help</span>
      </div>
      <div className="flex gap-[2px] pt-[6px] items-start">
        {[
          ["Layout", "w-[52px]"],
          ["Modeling", "w-[63px]"],
          ["Sculpting", "w-[64px]"],
          ["UV Editing", "w-[69px]"],
          ["Texture Paint", "w-[83px]"],
          ["Shading", "w-[58px]"],
          ["Animation", "w-[69px]"],
          ["Rendering", "w-[68px]"],
          ["Compositing", "w-[80px]"],
          ["Scripting", "w-[62px]"],
        ].map(([t, w]) => (
          <span key={t} className={`${w} h-[19px] rounded-t-[4px] flex items-center justify-center ${t === "Modeling" ? "bg-[#434343] text-[#e6e6e6]" : "bg-[#2a2a2a] text-[#939393]"}`}>{t}</span>
        ))}
        <span className="w-[18px] h-[19px] rounded-t-[4px] bg-[#2a2a2a] flex items-center justify-center"><Plus size={13} strokeWidth={1.200} color="#999" /></span>
      </div>
      <div className="ml-auto flex items-start pt-[3px] pr-[9px]">
        <SceneBox icon={<SceneIcon />} label="Scene" />
        <span className="w-[6px]" />
        <SceneBox icon={<LayerIcon />} label="View Layer" />
      </div>
    </div>
  );
}

function SceneBox({ icon, label }: { icon: React.ReactNode; label: string }) {
  return (
    <div className="h-[20px] flex rounded-[4px] overflow-hidden bg-[#2a2a2a] border border-[#3a3a3a]">
      <span className="w-[30px] flex items-center justify-center gap-[1px]">{icon}<Chev /></span>
      <span className="w-[121px] bg-[#1d1d1d] flex items-center pl-[7px] text-[#c8c8c8]">{label}</span>
      <span className="w-[19px] bg-[#545454] flex items-center justify-center">
        <Ic><path d="M1 4v9.500h8M3.500 1v10h9V4l-3-3z" stroke="#ddd" strokeWidth="1.100" /></Ic>
      </span>
      <span className="w-[19px] bg-[#3a3a3a] flex items-center justify-center"><X size={13} strokeWidth={1.100} color="#6f6f6f" /></span>
    </div>
  );
}

const Mouse = ({ mark }: { mark: "l" | "r" | "m" | "d" }) => (
  <svg width="12" height="16" viewBox="0 0 12 16" fill="none">
    <rect x="1.500" y="1" width="8.500" height="13.500" rx="4" stroke="#b0b0b0" />
    {mark === "l" && <path d="M3 3h2.300v4H3z" fill="#b0b0b0" />}
    {mark === "m" && <path d="M5 3h1.600v4H5z" fill="#b0b0b0" />}
    {mark === "r" && <path d="M6 3h2.500v4H6z" fill="#b0b0b0" />}
    {mark === "d" && <path d="M3 3h2.300v4H3z M11.500 2v4" stroke="#b0b0b0" fill="#b0b0b0" />}
  </svg>
);

function StatusBar() {
  return (
    <div className="h-[19px] bg-[#2b2b2b] flex items-center text-[11px] text-[#a6a6a6] shrink-0">
      <span className="ml-[11px] flex"><Mouse mark="l" /></span>
      <span className="ml-[11px]">Select</span>
      <span className="ml-[13px] flex"><Mouse mark="d" /></span>
      <span className="ml-[11px]">Box Select</span>
      <span className="ml-[94px] flex"><Mouse mark="m" /></span>
      <span className="ml-[8px]">Rotate View</span>
      <span className="ml-[154px] flex"><Mouse mark="r" /></span>
      <span className="ml-[12px]">Call Menu</span>
      <span className="ml-auto pr-[16px] tracking-[-0.14px]">Plane.001 | Verts:0/44 | Edges:0/49 | Faces:0/5 | Tris:52 | Objects:1/164 | Memory: 28.7 MiB | VRAM: 1.0/2.0 GiB | 2.90.1</span>
    </div>
  );
}

const TaskApp = ({ w, active, line, children }: { w: string; active?: boolean; line?: string; children: React.ReactNode }) => (
  <div className={`relative ${w} h-full flex items-center justify-center ${active ? "bg-[#555250]" : ""}`}>
    {children}
    {line && <span className={`absolute bottom-0 h-[2px] bg-[#a9b1b9] ${line}`} />}
  </div>
);

function Taskbar() {
  return (
    <div className="h-[40px] bg-gradient-to-r from-[#1d1a18] via-[#2a221d] to-[#3a2a20] flex text-white shrink-0">
      <div className="w-[48px] flex items-center justify-center"><FaWindows size={17} color="#fff" /></div>
      <div className="w-[344px] bg-[#f2f2f2] flex items-center pl-[12px] text-[#1a1a1a]">
        <Search size={18} strokeWidth={1.300} className="-scale-x-100" color="#111" />
        <span className="ml-[10px] text-[15px] font-['Open_Sans',sans-serif] tracking-[-0.2px]">Type here to search</span>
      </div>
      <div className="w-[48px] flex items-center justify-center">
        <svg width="16" height="16" viewBox="0 0 16 16" fill="none"><path d="M0 .5h11M0 15.500h11" stroke="#fff" /><rect x=".5" y="4" width="10" height="8" stroke="#fff" /><path d="M14 1v2M14 5v2M14 9v2M14 13v2" stroke="#fff" strokeWidth="2" /></svg>
      </div>
      <span className="w-[3px]" />
      <TaskApp w="w-[48px]">
        <svg width="24" height="24" viewBox="0 0 24 24"><path d="M2 3h8l2 2h10v4H2z" fill="#e8b93f" /><path d="M2 8h20v14H2z" fill="#f5cd57" /><path d="M8 15h8v7H8z" fill="#2f86d4" /><path d="M10 17h4v5h-4z" fill="#f5cd57" /></svg>
      </TaskApp>
      <TaskApp w="w-[48px]"><VscVscode size={25} color="#2b9fe6" /></TaskApp>
      <TaskApp w="w-[52px]" line="left-[6px] w-[40px]">
        <span className="relative flex items-center justify-center w-[24px] h-[24px] rounded-full bg-[#111]"><SiSpotify size={24} color="#1ed760" /></span>
      </TaskApp>
      <TaskApp w="w-[48px]">
        <svg width="26" height="26" viewBox="0 0 26 26" fill="none"><ellipse cx="13" cy="11" rx="10" ry="8" fill="#d9d9d9" transform="rotate(-35 13 11)" /><path d="M3 15c1 5 8 7 12 2" stroke="#c9454a" strokeWidth="2" /><path d="M10 5l5 12M20 4l-5 13" stroke="#fff" strokeWidth="1.300" /><circle cx="14" cy="20" r="2.200" stroke="#2f86d4" strokeWidth="1.500" /><circle cx="19" cy="20" r="2.200" stroke="#2f86d4" strokeWidth="1.500" /></svg>
      </TaskApp>
      <TaskApp w="w-[48px]" line="left-[4px] w-[40px]">
        <svg width="24" height="24" viewBox="0 0 24 24"><defs><linearGradient id="ff" x1="0" y1="0" x2="0" y2="1"><stop offset="0" stopColor="#ffbd2e" /><stop offset=".55" stopColor="#ff6a2b" /><stop offset="1" stopColor="#e6294f" /></linearGradient></defs><circle cx="12" cy="13" r="10.500" fill="url(#ff)" /><path d="M12 0c3 3 7 5 8 9l-7-1z" fill="#ffbd2e" /><circle cx="12" cy="13" r="5.500" fill="#6b2bb8" /><path d="M8 11c2-2 6-2 8 0l-3 1z" fill="#ffbd2e" /></svg>
      </TaskApp>
      <TaskApp w="w-[49px]" active>
        <span className="relative flex"><SiBlender size={23} color="#ea7600" /><span className="absolute left-[11px] top-[9px] w-[6px] h-[6px] rounded-full bg-[#2a6fb0]" /></span>
      </TaskApp>
      <TaskApp w="w-[48px]" line="left-[3px] w-[42px]">
        <span className="relative flex">
          <span className="absolute left-[3px] top-[3px] w-[16px] h-[16px] rounded-full bg-white" />
          <SiTelegram size={22} color="#2ca5e0" className="relative" />
          <span className="absolute -right-[3px] -bottom-[4px] px-[1px] h-[12px] bg-[#5a6a78] text-[9px] leading-[12px] text-white">310</span>
        </span>
      </TaskApp>
      <div className="ml-auto flex items-center text-[12px] text-[#f0f0f0]">
        <ChevronUp size={18} strokeWidth={1.300} />
        <Volume2 size={16} strokeWidth={1.100} className="ml-[6px]" />
        <span className="ml-[10px]">ENG</span>
        <div className="ml-[13px] w-[52px] text-center leading-[18px]">
          <div>09:48</div>
          <div>6/11/2020</div>
        </div>
        <span className="relative ml-[17px] mr-[23px] flex">
          <MessageSquare size={17} fill="#fff" color="#fff" />
          <span className="absolute left-[6px] top-[7px] w-[16px] h-[16px] rounded-full bg-[#333] border border-[#aaa] text-[10px] leading-[14px] text-center">1</span>
        </span>
      </div>
    </div>
  );
}

export default function App() {
  return (
    <div className="w-[1920px] h-[1080px] overflow-hidden flex flex-col bg-[#1c1c1c] font-['Noto_Sans',sans-serif]">
      <div className="h-[23px] bg-white flex items-center shrink-0">
        <span className="relative ml-[3px] flex"><SiBlender size={15} color="#ea7600" /><span className="absolute left-[7px] top-[6px] w-[4px] h-[4px] rounded-full bg-[#2a6fb0]" /></span>
        <span className="ml-[5px] text-[12px] text-[#111] font-['Open_Sans',sans-serif] tracking-[-0.35px]">Blender [D:\Blender\projects\scene.blend]</span>
        <div className="ml-auto flex items-center text-black">
          <span className="w-[45px] flex justify-center"><Minus size={13} strokeWidth={1} /></span>
          <span className="w-[46px] flex justify-center">
            <svg width="11" height="11" viewBox="0 0 11 11" fill="none"><path d="M.5 2.500h8v8h-8zM2.500 2.500V.5h8v8h-2" stroke="#111" /></svg>
          </span>
          <span className="w-[46px] flex justify-center mr-[2px]"><X size={17} strokeWidth={1} /></span>
        </div>
      </div>
      <TopBar />
      <div className="h-[971px] flex shrink-0">
        <Viewport />
        <div className="ml-[3px] flex-1 flex flex-col gap-[3px]">
          <Outliner />
          <Properties />
        </div>
      </div>
      <StatusBar />
      <Taskbar />
    </div>
  );
}
